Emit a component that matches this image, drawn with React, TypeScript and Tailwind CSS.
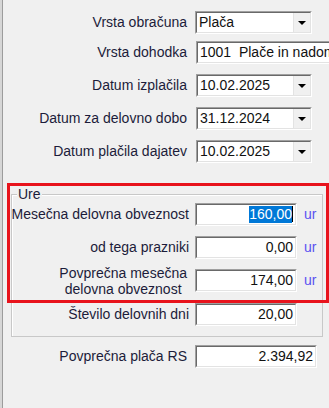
import React from 'react';

const font = { fontFamily: '"Liberation Sans", Arial, sans-serif' };

const Sunken: React.FC<{ className?: string; children?: React.ReactNode }> = ({ className = '', children }) => (
    <div className={`h-[23px] border border-t-[#a0a0a0] border-l-[#a0a0a0] border-b-white border-r-white ${className}`}>
        <div className="h-full border border-t-[#696969] border-l-[#696969] border-b-[#e3e3e3] border-r-[#e3e3e3] bg-white flex items-center">
            {children}
        </div>
    </div>
);

const Combo: React.FC<{ value: string; className?: string }> = ({ value, className = 'w-[117px]' }) => (
    <Sunken className={className}>
        <span className="flex-grow pl-[2px] text-[14px] text-[#111] whitespace-nowrap overflow-hidden">{value}</span>
        <div className="h-full w-[17px] flex-shrink-0 flex items-center justify-center bg-[#f0f0f0] border-l border-[#e3e3e3]">
            <div className="w-0 h-0 border-l-[4px] border-r-[4px] border-t-[4px] border-l-transparent border-r-transparent border-t-black" />
        </div>
    </Sunken>
);

const Row: React.FC<{ label: React.ReactNode; labelW: string; gap: string; className?: string; children: React.ReactNode }> = ({ label, labelW, gap, className = '', children }) => (
    <div className={`flex items-center h-[23px] ${className}`}>
        <div className={`${labelW} flex-shrink-0 flex justify-end text-[14px] text-[#1c1c3a] whitespace-nowrap`}>{label}</div>
        <div className={gap}>{children}</div>
    </div>
);

const Num: React.FC<{ value: string; selected?: boolean; className?: string }> = ({ value, selected, className = 'w-[102px]' }) => (
    <Sunken className={className}>
        <div className="flex-grow flex justify-end pr-[2px] text-[14px] text-[#111]">
            {selected ? <span className="bg-[#0078d7] text-white leading-[17px]">{value}</span> : <span>{value}</span>}
            {selected && <span className="w-px h-[16px] bg-black" />}
        </div>
    </Sunken>
);

const Unit = () => <span className="ml-[7px] text-[14px] text-[#5a50f0]">ur</span>;

export default function App() {
    return (
        <div style={font} className="relative w-[329px] h-[408px] overflow-hidden bg-[#f0f0f0] border-l-2 border-[#d6d6d6]">
            <div className="h-full border-l border-[#9c9c9c] pt-[11px]">
                <Row label="Vrsta obračuna" labelW="w-[184px]" gap="ml-[8px]">
                    <Combo value="Plača" />
                </Row>
                <Row label="Vrsta dohodka" labelW="w-[184px]" gap="ml-[9px]" className="mt-[7px]">
                    <Sunken className="w-[140px]">
                        <span className="pl-[2px] text-[14px] text-[#111] whitespace-pre">1001  Plače in nadomestila</span>
                    </Sunken>
                </Row>
                <Row label="Datum izplačila" labelW="w-[184px]" gap="ml-[9px]" className="mt-[10px]">
                    <Combo value="10.02.2025" className="w-[116px]" />
                </Row>
                <Row label="Datum za delovno dobo" labelW="w-[184px]" gap="ml-[9px]" className="mt-[10px]">
                    <Combo value="31.12.2024" className="w-[116px]" />
                </Row>
                <Row label="Datum plačila dajatev" labelW="w-[184px]" gap="ml-[9px]" className="mt-[10px]">
                    <Combo value="10.02.2025" className="w-[116px]" />
                </Row>

                {/* Ure group */}
                <div className="relative ml-[8px] mt-[31px] w-[312px] border border-[#c8c8c8] shadow-[inset_1px_1px_0_#fff] pt-[8px] pb-[10px]">
                    <span className="absolute -top-[9px] left-[5px] px-[1px] bg-[#f0f0f0] text-[14px] leading-[16px] text-[#1c1c3a]">Ure</span>
                    <Row label="Mesečna delovna obveznost" labelW="w-[177px]" gap="ml-[6px] flex items-center">
                        <Num value="160,00" selected />
                        <Unit />
                    </Row>
                    <Row label="od tega prazniki" labelW="w-[177px]" gap="ml-[6px] flex items-center" className="mt-[10px]">
                        <Num value="0,00" />
                        <Unit />
                    </Row>
                    <Row
                        label={<span className="text-center leading-[16px]">Povprečna mesečna<br />delovna obveznost</span>}
                        labelW="w-[175px]"
                        gap="ml-[8px] flex items-center"
                        className="mt-[10px]"
                    >
                        <Num value="174,00" />
                        <Unit />
                    </Row>
                    <Row label="Število delovnih dni" labelW="w-[177px]" gap="ml-[6px]" className="mt-[11px]">
                        <Num value="20,00" />
                    </Row>
                </div>

                <Row label="Povprečna plača RS" labelW="w-[184px]" gap="ml-[8px]" className="mt-[8px]">
                    <Num value="2.394,92" className="w-[122px]" />
                </Row>
            </div>

            {/* red annotation frame */}
            <div className="absolute left-[5px] top-[183px] w-[322px] h-[120px] border-[3px] border-[#e8131c]" />
        </div>
    );
}
